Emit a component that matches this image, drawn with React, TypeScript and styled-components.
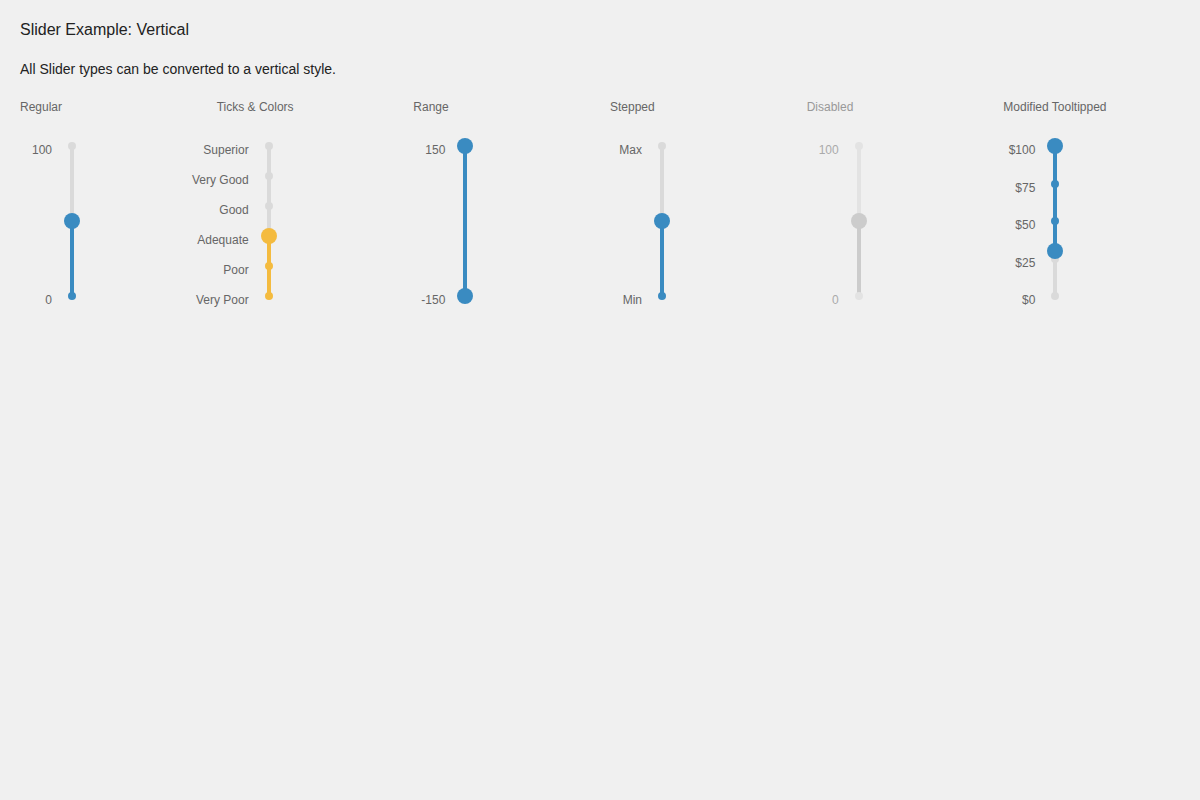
import React from "react";
import styled, { createGlobalStyle } from "styled-components";

const GlobalStyle = createGlobalStyle`
  html, body {
    margin: 0;
    padding: 0;
    background: #f0f0f0;
    font-family: "Liberation Sans", Arial, sans-serif;
  }
`;

const BLUE = "#3a8bc1";
const YELLOW = "#f4bb3f";
const TRACK = "#dadada";
const TRACK_H = 150;
const PAD = 8;

interface Tick {
  value: number;
  label: string;
}

interface SliderProps {
  min: number;
  max: number;
  values: number[];
  ticks: Tick[];
  color?: string;
  disabled?: boolean;
}

const Slider = ({ min, max, values, ticks, color = BLUE, disabled }: SliderProps) => {
  const pos = (v: number) => PAD + (1 - (v - min) / (max - min)) * TRACK_H;
  const lo = values.length > 1 ? Math.min(...values) : min;
  const hi = Math.max(...values);
  const fill = disabled ? "#cccccc" : color;
  const rail = disabled ? "#e3e3e3" : TRACK;

  return (
    <SliderBox>
      <Rail $color={rail} />
      <Fill style={{ top: pos(hi), height: pos(lo) - pos(hi), background: fill }} />
      {ticks.map((t) => (
        <React.Fragment key={t.label}>
          <TickLabel $disabled={disabled} style={{ top: pos(t.value) - 3 }}>
            {t.label}
          </TickLabel>
          <Dot
            style={{
              top: pos(t.value) - 4,
              background: !disabled && t.value >= lo && t.value <= hi ? fill : rail,
            }}
          />
        </React.Fragment>
      ))}
      {values.map((v, i) => (
        <Handle key={i} style={{ top: pos(v) - 8, background: fill }} />
      ))}
    </SliderBox>
  );
};

const range = (labels: string[], min: number, max: number): Tick[] =>
  labels.map((label, i) => ({
    label,
    value: max - (i * (max - min)) / (labels.length - 1),
  }));

export default function App() {
  return (
    <Page>
      <GlobalStyle />
      <Title>Slider Example: Vertical</Title>
      <Intro>All Slider types can be converted to a vertical style.</Intro>
      <Columns>
        <Column>
          <Heading>Regular</Heading>
          <Slider min={0} max={100} values={[50]} ticks={range(["100", "0"], 0, 100)} />
        </Column>
        <Column>
          <Heading>Ticks &amp; Colors</Heading>
          <Slider
            min={0}
            max={5}
            values={[2]}
            color={YELLOW}
            ticks={range(["Superior", "Very Good", "Good", "Adequate", "Poor", "Very Poor"], 0, 5)}
          />
        </Column>
        <Column>
          <Heading>Range</Heading>
          <Slider min={-150} max={150} values={[-150, 150]} ticks={range(["150", "-150"], -150, 150)} />
        </Column>
        <Column>
          <Heading>Stepped</Heading>
          <Slider min={0} max={100} values={[50]} ticks={range(["Max", "Min"], 0, 100)} />
        </Column>
        <Column>
          <Heading $disabled>Disabled</Heading>
          <Slider min={0} max={100} values={[50]} disabled ticks={range(["100", "0"], 0, 100)} />
        </Column>
        <Column>
          <Heading>Modified Tooltipped</Heading>
          <Slider
            min={0}
            max={100}
            values={[30, 100]}
            ticks={range(["$100", "$75", "$50", "$25", "$0"], 0, 100)}
          />
        </Column>
      </Columns>
    </Page>
  );
}

const Page = styled.div`
  padding: 20px 0 20px 20px;
  color: #222;
`;

const Title = styled.h1`
  margin: 0;
  font-size: 16px;
  font-weight: normal;
  line-height: 20px;
  color: #222;
`;

const Intro = styled.p`
  margin: 20px 0 0;
  font-size: 14px;
  line-height: 18px;
  color: #222;
`;

const Columns = styled.div`
  margin-top: 22px;
  display: grid;
  grid-template-columns: repeat(6, 1fr);
  width: 1180px;
`;

const Column = styled.div`
  display: flex;
  flex-direction: column;
  gap: 24px;
`;

const Heading = styled.div<{ $disabled?: boolean }>`
  font-size: 12px;
  line-height: 14px;
  color: ${(p) => (p.$disabled ? "#999" : "#666")};
`;

const SliderBox = styled.div`
  position: relative;
  width: 60px;
  height: ${TRACK_H + PAD * 2}px;
`;

const Rail = styled.div<{ $color: string }>`
  position: absolute;
  left: 50px;
  top: ${PAD}px;
  width: 4px;
  height: ${TRACK_H}px;
  background: ${(p) => p.$color};
`;

const Fill = styled.div`
  position: absolute;
  left: 50px;
  width: 4px;
`;

const Dot = styled.div`
  position: absolute;
  left: 48px;
  width: 8px;
  height: 8px;
  border-radius: 50%;
`;

const Handle = styled.div`
  position: absolute;
  left: 44px;
  width: 16px;
  height: 16px;
  border-radius: 50%;
`;

const TickLabel = styled.div<{ $disabled?: boolean }>`
  position: absolute;
  right: 28px;
  height: 14px;
  line-height: 14px;
  font-size: 12px;
  white-space: nowrap;
  text-align: right;
  color: ${(p) => (p.$disabled ? "#aaa" : "#666")};
`;
